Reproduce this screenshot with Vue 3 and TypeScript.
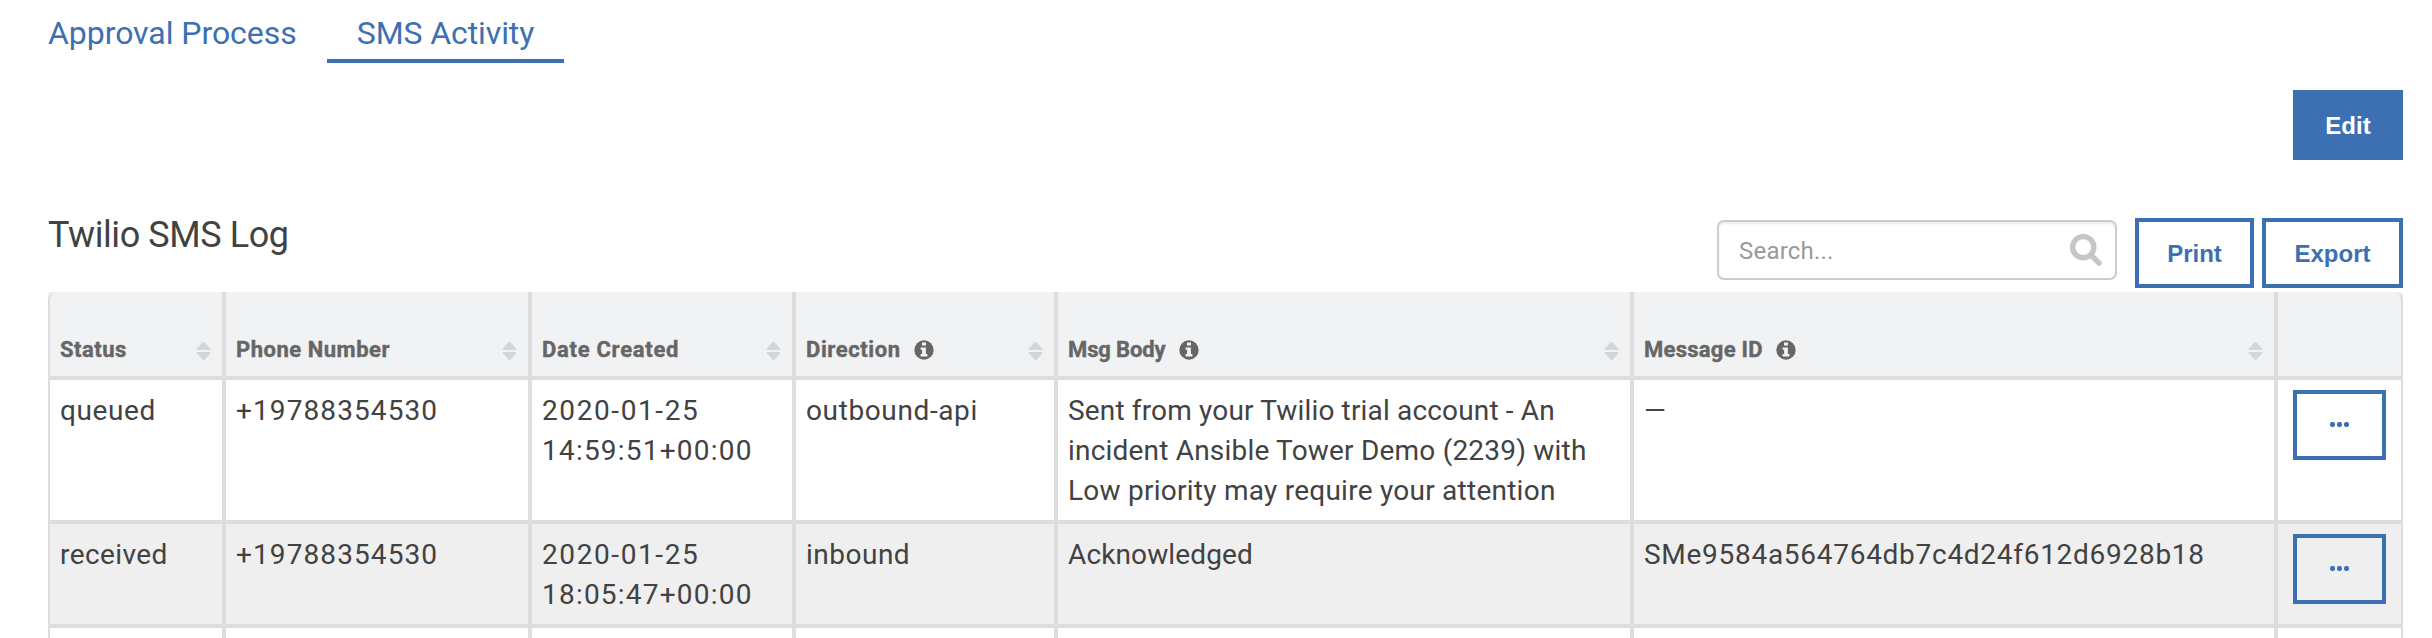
<script setup lang="ts">
interface Run { text: string; track: number }
interface Column { title: Run; info?: boolean }
interface Row { cells: Run[][] }

const run = (text: string, track = 0): Run => ({ text, track })

const tabs = [
  { label: run('Approval Process', -0.05), active: false },
  { label: run('SMS Activity', -0.09), active: true },
]

const columns: Column[] = [
  { title: run('Status', 0.49) },
  { title: run('Phone Number', 0.52) },
  { title: run('Date Created', 0.72) },
  { title: run('Direction', 0.6), info: true },
  { title: run('Msg Body', -0.12), info: true },
  { title: run('Message ID', 0.26), info: true },
]

const rows: Row[] = [
  {
    cells: [
      [run('queued', 0.6)],
      [run('+19788354530', 1.1)],
      [run('2020-01-25', 1.6), run('14:59:51+00:00', 1.22)],
      [run('outbound-api', 0.62)],
      [
        run('Sent from your Twilio trial account - An', 0.16),
        run('incident Ansible Tower Demo (2239) with', 0.2),
        run('Low priority may require your attention', 0.25),
      ],
      [run('—')],
    ],
  },
  {
    cells: [
      [run('received', 0.42)],
      [run('+19788354530', 1.1)],
      [run('2020-01-25', 1.6), run('18:05:47+00:00', 1.22)],
      [run('inbound', 0.5)],
      [run('Acknowledged', 0.13)],
      [run('SMe9584a564764db7c4d24f612d6928b18', 0.72)],
    ],
  },
]

const spacing = (r: Run) => ({ letterSpacing: `${r.track}px` })
</script>

<template>
  <main class="page">
    <nav class="tabs">
      <a v-for="tab in tabs" :key="tab.label.text" class="tab" :class="{ active: tab.active }">
        <span :style="spacing(tab.label)">{{ tab.label.text }}</span>
      </a>
    </nav>

    <div class="actions">
      <button class="btn primary">Edit</button>
    </div>

    <header class="bar">
      <h2 class="title">Twilio SMS Log</h2>
      <div class="tools">
        <div class="search">
          <span class="placeholder">Search...</span>
          <svg class="lens" viewBox="0 0 32 32" width="32" height="32">
            <circle cx="13.2" cy="13.2" r="10.6" fill="none" stroke="#c6c6c6" stroke-width="5.4" />
            <path d="M21.5 21.5 L29 29" stroke="#c6c6c6" stroke-width="5.4" stroke-linecap="round" />
          </svg>
        </div>
        <button class="btn print">Print</button>
        <button class="btn export">Export</button>
      </div>
    </header>

    <section class="backing">
      <div class="table">
        <div class="row head">
          <div v-for="col in columns" :key="col.title.text" class="cell">
            <span class="heading" :style="spacing(col.title)">{{ col.title.text }}</span>
            <svg v-if="col.info" class="info" viewBox="0 0 20 20" width="20" height="20">
              <circle cx="10" cy="10" r="9.7" fill="#666" />
              <path d="M8 2.6h4v3H8zM6.6 7.4h5.3v6.7h1.5v2.4H6.6v-2.4h1.5V9.8H6.6z" fill="#f1f2f4" />
            </svg>
            <svg class="sort" viewBox="0 0 16 18" width="15" height="18" preserveAspectRatio="none">
              <path d="M1.6 8 Q0 7.8 1 6.4 L6.8 0.6 Q8 -0.4 9.2 0.6 L15 6.4 Q16 7.8 14.4 8z" fill="#d4d5d7" />
              <path d="M1.6 10 Q0 10.2 1 11.6 L6.8 17.4 Q8 18.4 9.2 17.4 L15 11.6 Q16 10.2 14.4 10z" fill="#d4d5d7" />
            </svg>
          </div>
          <div class="cell"></div>
        </div>

        <div v-for="(row, i) in rows" :key="i" class="row body" :class="{ striped: i % 2 === 1 }">
          <div v-for="(cell, c) in row.cells" :key="c" class="cell">
            <div v-for="line in cell" :key="line.text" class="line" :style="spacing(line)">{{ line.text }}</div>
          </div>
          <div class="cell menu">
            <button class="btn more" aria-label="More actions">
              <i class="dot"></i><i class="dot"></i><i class="dot"></i>
            </button>
          </div>
        </div>

        <div class="row rest">
          <div v-for="n in 7" :key="n" class="cell"></div>
        </div>
      </div>
    </section>
  </main>
</template>

<style>
html,
body {
  margin: 0;
  background: #fff;
  overflow: hidden;
}
</style>

<style scoped>
.page {
  box-sizing: border-box;
  width: 2432px;
  height: 638px;
  padding: 0 29px 0 48px;
  overflow: hidden;
  display: flex;
  flex-direction: column;
  font-family: Roboto, "Liberation Sans", sans-serif;
  color: #424242;
}
.tabs {
  display: flex;
  height: 63px;
  flex: none;
}
.tab {
  box-sizing: border-box;
  height: 63px;
  padding-top: 13px;
  font-size: 32px;
  line-height: 40px;
  color: #3d70b2;
  white-space: nowrap;
  width: 279px;
}
.tab.active {
  width: 237px;
  text-align: center;
  border-bottom: 4px solid #3d70b2;
}
.actions {
  display: flex;
  justify-content: flex-end;
  margin-top: 27px;
}
.btn {
  box-sizing: border-box;
  height: 70px;
  padding: 1px 0 0;
  border: 4px solid #3d70b2;
  border-radius: 0;
  background: transparent;
  color: #3d70b2;
  font: bold 24px "Liberation Sans", sans-serif;
  display: flex;
  align-items: center;
  justify-content: center;
}
.primary {
  width: 110px;
  background: #3d70b2;
  color: #fff;
}
.print {
  width: 119px;
  margin-left: 18px;
}
.export {
  width: 141px;
  margin-left: 8px;
}
.bar {
  display: flex;
  justify-content: space-between;
  height: 132px;
  flex: none;
}
.title {
  margin: 53px 0 0;
  font-size: 36px;
  line-height: 44px;
  font-weight: 400;
  letter-spacing: -0.42px;
}
.tools {
  display: flex;
  padding-top: 58px;
}
.search {
  box-sizing: border-box;
  width: 400px;
  height: 60px;
  margin-top: 2px;
  padding: 0 13px 0 20px;
  border: 2px solid #ccc;
  border-radius: 7px;
  box-shadow: inset 0 2px 2px rgba(0, 0, 0, 0.075);
  display: flex;
  align-items: center;
  justify-content: space-between;
}
.placeholder {
  padding-top: 2px;
  font-size: 24px;
  color: #999;
  letter-spacing: 0.2px;
}
.backing {
  background: #f1f2f4;
}
.table {
  border: solid #ddd;
  border-width: 0 2px;
  border-radius: 8px 8px 0 0;
}
.row {
  display: grid;
  grid-template-columns: 176px 306px 264px 262px 576px 644px 123px;
  border-bottom: 4px solid #ddd;
}
.cell {
  box-sizing: border-box;
  border-right: 4px solid #ddd;
  padding-left: 10px;
}
.cell:last-child {
  border-right: 0;
}
.head .cell {
  height: 84px;
  padding-top: 32px;
  display: flex;
  align-items: center;
}
.heading {
  font-size: 22px;
  font-weight: 700;
  line-height: 28px;
  color: #666;
  white-space: nowrap;
  -webkit-text-stroke: 0.4px #666;
}
.info {
  margin-left: 13px;
}
.sort {
  margin: 2px 11px 0 auto;
}
.body {
  background: #fff;
}
.body .cell {
  min-height: 100px;
  padding-top: 11px;
  padding-bottom: 9px;
}
.striped {
  background: #efefef;
}
.line {
  font-size: 28px;
  line-height: 40px;
  white-space: nowrap;
}
.body .menu {
  padding-top: 10px;
  padding-left: 15px;
}
.more {
  width: 93px;
  gap: 2px;
  padding: 0 0 2px;
}
.dot {
  width: 5px;
  height: 5px;
  border-radius: 2px;
  background: #3d70b2;
}
.rest {
  background: #fff;
  grid-auto-rows: 20px;
}
</style>
